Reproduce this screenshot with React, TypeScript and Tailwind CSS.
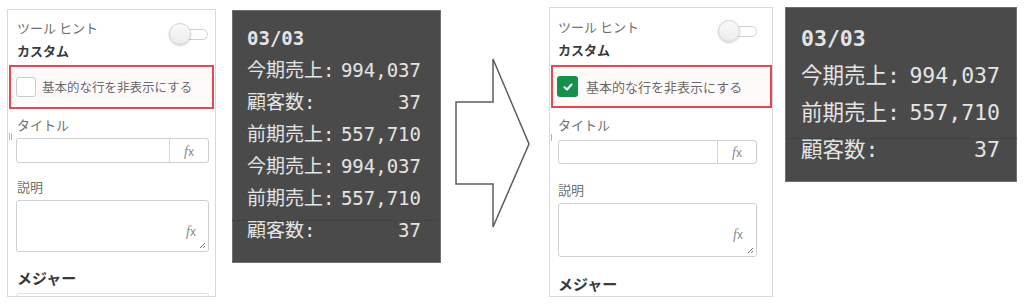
const JP = "font-['Noto_Sans_CJK_JP','Noto_Sans',sans-serif]";

function Toggle({ className }: { className: string }) {
  return (
    <div className={`relative h-[22px] w-[40px] shrink-0 ${className}`}>
      <div className="absolute left-0 top-[6px] h-[11px] w-[39px] rounded-full border border-[#cfcfcf] bg-white" />
      <div className="absolute left-0 top-0 h-[22px] w-[22px] rounded-full border border-[#d4d4d4] bg-gradient-to-b from-[#fafafa] to-[#ececec] shadow-[0_1px_2px_rgba(0,0,0,0.18)]" />
    </div>
  );
}

function Fx() {
  return (
    <span className="text-[14px] leading-none text-[#8a8a8a]">
      <span className="font-['Liberation_Serif',serif] italic">f</span>
      <span className="font-['Liberation_Sans',sans-serif] text-[12px]">x</span>
    </span>
  );
}

function Grip() {
  return (
    <svg width="7" height="7" viewBox="0 0 7 7" className="absolute bottom-[2px] right-[2px]">
      <path d="M6 1 L1 6 M6 4 L4 6" stroke="#777" strokeWidth="1" />
    </svg>
  );
}

function Check() {
  return (
    <svg width="10" height="8" viewBox="0 0 10 8">
      <path d="M1.5 4.2 L4 6.5 L8.5 1.5" fill="none" stroke="#fff" strokeWidth="2" strokeLinecap="round" strokeLinejoin="round" />
    </svg>
  );
}

const V = {
  left: {
    outer: "ml-[7px] mt-[9px] w-[209px] h-[288px]",
    header: "h-[32px] pl-[9px] pr-[6px]",
    headText: "mt-[9px]",
    toggle: "mt-[13px]",
    custom: "mt-0 pl-[9px]",
    red: "mt-[5px] mx-[1px] h-[44px] pl-[5px] gap-[6px]",
    box: "h-[20px] w-[20px]",
    optText: "text-[12.5px]",
    title: "mt-[7px] pl-[9px]",
    input: "mt-[4px] ml-[8px] mr-[6px] h-[25px]",
    desc: "mt-[15px] pl-[9px]",
    area: "mt-[4px] ml-[8px] mr-[6px] h-[52px]",
    areaFx: "right-[12px] bottom-[10px]",
    measure: "mt-[16px] pl-[9px]",
    handle: "left-[1px] top-[123px]",
  },
  right: {
    outer: "mt-[7px] w-[224px] h-[290px]",
    header: "h-[32px] pl-[8px] pr-[14px]",
    headText: "mt-[10px]",
    toggle: "mt-[12px]",
    custom: "mt-[1px] pl-[8px]",
    red: "mt-[6px] ml-[1px] h-[43px] pl-[4px] gap-[8px]",
    box: "h-[21px] w-[21px]",
    optText: "text-[13px]",
    title: "mt-[8px] pl-[8px]",
    input: "mt-[6px] ml-[8px] mr-[15px] h-[24px]",
    desc: "mt-[17px] pl-[8px]",
    area: "mt-[4px] ml-[8px] mr-[15px] h-[54px]",
    areaFx: "right-[13px] bottom-[12px]",
    measure: "mt-[17px] pl-[8px]",
    handle: "left-[1px] top-[126px]",
  },
};

function Panel({ side }: { side: "left" | "right" }) {
  const v = V[side];
  const checked = side === "right";
  return (
    <div className={`relative shrink-0 overflow-hidden border border-[#d9d9d9] bg-white ${JP} ${v.outer}`}>
      <div className={`flex items-start justify-between ${v.header}`}>
        <span className={`text-[13px] leading-[18px] text-[#707070] ${v.headText}`}>ツール ヒント</span>
        <Toggle className={v.toggle} />
      </div>
      <div className={`text-[13px] font-bold leading-[18px] text-[#3a3a3a] ${v.custom}`}>カスタム</div>
      <div className={`flex items-center border-2 border-[#e6484d] bg-[#fffafa] ${v.red}`}>
        {checked ? (
          <div className={`flex items-center justify-center rounded-[3px] bg-[#14914a] ${v.box}`}>
            <Check />
          </div>
        ) : (
          <div className={`rounded-[3px] border border-[#cacaca] bg-white ${v.box}`} />
        )}
        <span className={`leading-[18px] text-[#6a6a6a] ${v.optText}`}>基本的な行を非表示にする</span>
      </div>
      <div className={`text-[13px] leading-[18px] text-[#707070] ${v.title}`}>タイトル</div>
      <div className={`flex rounded-[3px] border border-[#cfcfcf] bg-white ${v.input}`}>
        <div className="flex-1" />
        <div className="flex w-[39px] items-center justify-center border-l border-[#d6d6d6]">
          <Fx />
        </div>
      </div>
      <div className={`text-[13px] leading-[18px] text-[#707070] ${v.desc}`}>説明</div>
      <div className={`relative rounded-[3px] border border-[#cfcfcf] bg-white ${v.area}`}>
        <div className={`absolute ${v.areaFx}`}>
          <Fx />
        </div>
        <Grip />
      </div>
      <div className={`text-[15px] font-bold leading-[20px] text-[#3a3a3a] ${v.measure}`}>メジャー</div>
      {side === "left" && <div className="mt-[5px] ml-[8px] mr-[6px] h-[20px] rounded-t-[3px] border border-[#e2e2e2]" />}
      <div className={`absolute flex h-[7px] gap-[1px] ${v.handle}`}>
        <span className="w-px bg-[#b5b5b5]" />
        {side === "left" && <span className="w-px bg-[#b5b5b5]" />}
      </div>
    </div>
  );
}

type Row = [string, string];

function Tip({ rows, size }: { rows: Row[]; size: "sm" | "lg" }) {
  const lg = size === "lg";
  return (
    <div
      className={`shrink-0 border border-[#707070] bg-[#4a4a4a] text-[#e4e4e4] font-['DejaVu_Sans_Mono','Noto_Sans_CJK_JP',monospace] ${
        lg
          ? "ml-[12px] mt-[7px] h-[175px] w-[232px] pl-[15px] pr-[16px] pt-[12px] text-[21.5px] leading-[37px]"
          : "ml-[16px] mt-[10px] h-[253px] w-[209px] pl-[14px] pr-[19px] pt-[11px] text-[19px] leading-[32px]"
      }`}
    >
      <div className="font-bold">03/03</div>
      {rows.map(([k, val], i) => (
        <div key={i} className="relative flex justify-between">
          {i === rows.length - 1 && (
            <span className={`absolute left-[-15px] right-[-17px] h-px bg-[#434343] ${lg ? "top-[7px]" : "top-[6px]"}`} />
          )}
          <span>{k}</span>
          <span>{val}</span>
        </div>
      ))}
    </div>
  );
}

function Arrow() {
  return (
    <svg width="108" height="308" viewBox="0 0 108 308" className="shrink-0">
      <polygon
        points="15,102 52,102 52,59 88,144 52,227 52,184 15,184"
        fill="#fff"
        stroke="#5c5c5c"
        strokeWidth="1.5"
      />
    </svg>
  );
}

export default function App() {
  const before: Row[] = [
    ["今期売上:", "994,037"],
    ["顧客数:", "37"],
    ["前期売上:", "557,710"],
    ["今期売上:", "994,037"],
    ["前期売上:", "557,710"],
    ["顧客数:", "37"],
  ];
  const after: Row[] = [
    ["今期売上:", "994,037"],
    ["前期売上:", "557,710"],
    ["顧客数:", "37"],
  ];
  return (
    <div className="flex h-[308px] w-[1024px] items-start overflow-hidden bg-white">
      <Panel side="left" />
      <Tip rows={before} size="sm" />
      <Arrow />
      <Panel side="right" />
      <Tip rows={after} size="lg" />
    </div>
  );
}
